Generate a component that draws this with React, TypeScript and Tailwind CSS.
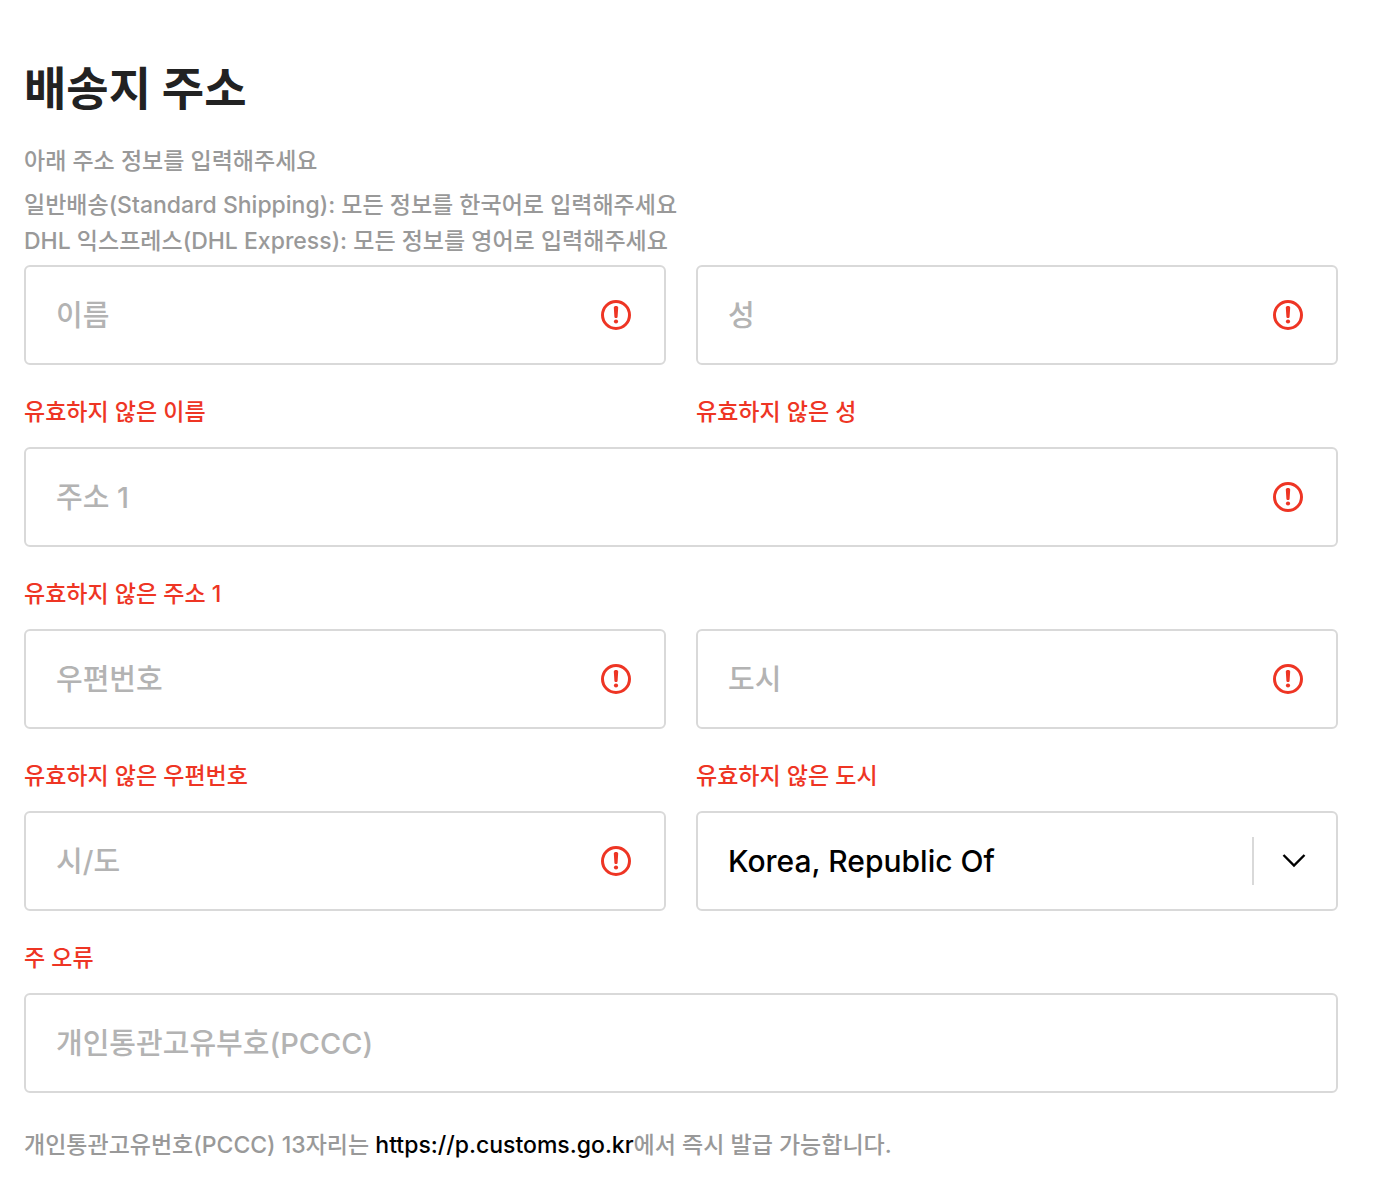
import { ChangeEvent, useState } from "react";

type FieldProps = {
  id: string;
  label: string;
  error?: string;
  wide?: boolean;
};

const fields: FieldProps[] = [
  { id: "first-name", label: "이름", error: "유효하지 않은 이름" },
  { id: "last-name", label: "성", error: "유효하지 않은 성" },
  { id: "address1", label: "주소 1", error: "유효하지 않은 주소 1", wide: true },
  { id: "postal-code", label: "우편번호", error: "유효하지 않은 우편번호" },
  { id: "city", label: "도시", error: "유효하지 않은 도시" },
  { id: "state", label: "시/도", error: "주 오류" },
];

function AlertIcon() {
  return (
    <svg
      className="w-[30px] h-[30px] shrink-0"
      viewBox="0 0 30 30"
      fill="none"
      aria-hidden="true"
    >
      <circle cx="15" cy="15" r="13.5" stroke="#ee3524" strokeWidth="3" />
      <path
        d="M12.8 7.6c0-1 .9-1.6 2.2-1.6s2.2.6 2.2 1.6l-.6 9.2c0 .8-.6 1.3-1.6 1.3s-1.6-.5-1.6-1.3z"
        fill="#ee3524"
      />
      <circle cx="15" cy="21.5" r="2.1" fill="#ee3524" />
    </svg>
  );
}

function Field({ id, label, error, wide }: FieldProps) {
  return (
    <div className={wide ? "col-span-2" : ""}>
      <div className="flex items-center h-[100px] pr-[33px] border-2 border-[#d9d9d9] rounded-md">
        <input
          id={id}
          type="text"
          aria-label={label}
          aria-invalid={error ? true : undefined}
          aria-describedby={error ? `${id}-error` : undefined}
          placeholder={label}
          className="flex-1 min-w-0 h-full pl-[30px] text-[29px] text-black placeholder:text-[#b3b3b3] outline-none"
        />
        {error && <AlertIcon />}
      </div>
      {error && (
        <p id={`${id}-error`} className="mt-[29px] text-[#ee3524]">
          {error}
        </p>
      )}
    </div>
  );
}

function CountrySelect() {
  const [country, setCountry] = useState("KR");

  return (
    <div className="relative h-[100px]">
      <select
        aria-label="국가"
        value={country}
        onChange={(e: ChangeEvent<HTMLSelectElement>) =>
          setCountry(e.target.value)
        }
        className="appearance-none w-full h-full pl-[30px] pr-24 text-[30px] text-black bg-white border-2 border-[#d9d9d9] rounded-md outline-none"
      >
        <option value="KR">Korea, Republic Of</option>
      </select>
      <div className="absolute inset-y-0 right-8 flex items-center gap-7 pointer-events-none">
        <span className="w-0.5 h-12 bg-[#d9d9d9]" />
        <svg
          className="w-6 h-6"
          viewBox="0 0 24 24"
          fill="none"
          stroke="#000"
          strokeWidth="2.4"
          aria-hidden="true"
        >
          <path d="M1.5 6 12 16.5 22.5 6" />
        </svg>
      </div>
    </div>
  );
}

export default function App() {
  return (
    <main className="min-h-screen bg-white pt-[60px] pb-6 pl-6 pr-10 font-['Inter','Noto_Sans_CJK_KR',sans-serif] font-medium text-[23px] leading-9 text-[#999]">
      <h1 className="text-[46px] leading-[56px] font-bold text-[#222]">
        배송지 주소
      </h1>
      <p className="mt-[27px]">아래 주소 정보를 입력해주세요</p>
      <p className="mt-2">
        일반배송(Standard Shipping): 모든 정보를 한국어로 입력해주세요
        <br />
        DHL 익스프레스(DHL Express): 모든 정보를 영어로 입력해주세요
      </p>

      <form className="mt-1.5 grid grid-cols-2 gap-x-[30px] gap-y-[17px]">
        {fields.map((field) => (
          <Field key={field.id} {...field} />
        ))}
        <CountrySelect />
        <Field id="pccc" label="개인통관고유부호(PCCC)" wide />
      </form>

      <p className="mt-[34px]">
        개인통관고유번호(PCCC) 13자리는{" "}
        <a href="https://p.customs.go.kr" className="text-black">
          https://p.customs.go.kr
        </a>
        에서 즉시 발급 가능합니다.
      </p>
    </main>
  );
}
